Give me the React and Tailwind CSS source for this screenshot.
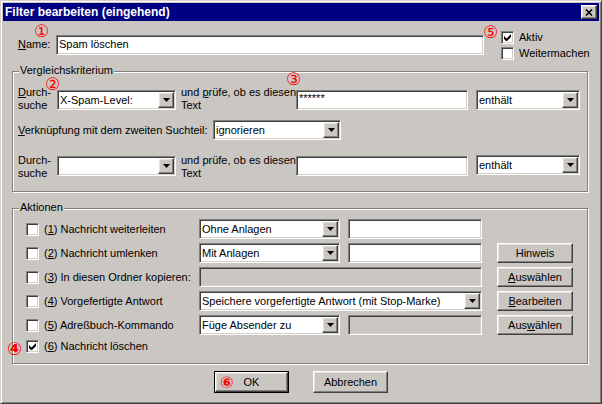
import React from 'react';

const sunken =
  'border border-t-[#808080] border-l-[#808080] border-r-white border-b-white shadow-[inset_1px_1px_0_#404040,inset_-1px_-1px_0_#d4d0c8]';
const raised =
  'border border-t-white border-l-white border-r-[#404040] border-b-[#404040] shadow-[inset_-1px_-1px_0_#808080,inset_1px_1px_0_#e4e1dc] bg-[#cac6c2]';

const U = ({ children }) => <u className="underline underline-offset-[1px] decoration-1">{children}</u>;

function Arrow() {
  return (
    <div className={`${raised} w-[16px] h-[16px] shrink-0 flex items-center justify-center`}>
      <svg width="7" height="4" viewBox="0 0 7 4">
        <path d="M0 0h7L3.5 4z" fill="#000" />
      </svg>
    </div>
  );
}

function Combo({ className = '', value }) {
  return (
    <div className={`${sunken} bg-white h-[20px] flex items-center pl-[2px] pr-[1px] shrink-0 ${className}`}>
      <span className="flex-1 whitespace-nowrap overflow-hidden">{value}</span>
      <Arrow />
    </div>
  );
}

function TextBox({ className = '', disabled, children }) {
  return (
    <div
      className={`${sunken} h-[20px] flex items-center pl-[2px] shrink-0 whitespace-nowrap ${
        disabled ? 'bg-[#cac6c2]' : 'bg-white'
      } ${className}`}
    >
      {children}
    </div>
  );
}

function Check({ checked }) {
  return (
    <div className={`${sunken} bg-white w-[13px] h-[13px] shrink-0 flex items-center justify-center`}>
      {checked && (
        <svg width="7" height="7" viewBox="0 0 7 7">
          <path d="M0 2v3l2 2h1l4-4V0L2.5 4.5z" fill="#000" />
        </svg>
      )}
    </div>
  );
}

function Button({ className = '', children }) {
  return (
    <div className={`${raised} h-[20px] w-[76px] shrink-0 flex items-center justify-center ${className}`}>
      {children}
    </div>
  );
}

function Group({ label, className = '', children }) {
  return (
    <div className={`relative border border-[#808080] shadow-[inset_1px_1px_0_#ffffff,1px_1px_0_#ffffff] ${className}`}>
      <span className="absolute left-[6px] -top-[8px] bg-[#cac6c2] px-[1px]">{label}</span>
      {children}
    </div>
  );
}

// red circled numbers lying over the dialog
function Marker({ className, children }) {
  return (
    <span className={`absolute leading-[11px] text-[#ff0000] font-['DejaVu_Sans',sans-serif] ${className}`}>
      {children}
    </span>
  );
}

function ActionRow({ label, checked, children, button }) {
  return (
    <div className="flex h-[20px] items-center pl-[13px]">
      <div className="flex items-center w-[173px] shrink-0">
        <Check checked={checked} />
        <span className="ml-[5px] whitespace-nowrap">{label}</span>
      </div>
      <div className="flex w-[283px] shrink-0">{children}</div>
      {button && <Button className="ml-[15px]">{button}</Button>}
    </div>
  );
}

export default function App() {
  return (
    <div className="relative w-[602px] h-[404px] overflow-hidden font-['Liberation_Sans',Arial,sans-serif] text-[11px] leading-[13px] text-black select-none">
      <div className="w-full h-full bg-[#cac6c2] border border-t-[#d4d0c8] border-l-[#d4d0c8] border-r-[#404040] border-b-[#404040] shadow-[inset_1px_1px_0_#ffffff,inset_-1px_-1px_0_#808080] p-[2px] flex flex-col">
        {/* title bar */}
        <div className="h-[18px] bg-[#000080] flex items-center pl-[2px] pr-[2px] shrink-0">
          <span className="flex-1 text-white font-bold text-[12px] leading-[14px]">Filter bearbeiten (eingehend)</span>
          <div className={`${raised} w-[16px] h-[14px] flex items-center justify-center`}>
            <svg width="8" height="7" viewBox="0 0 8 7">
              <path d="M1 0.5L7 6.5M7 0.5L1 6.5" stroke="#000" strokeWidth="1.6" />
            </svg>
          </div>
        </div>

        {/* name row */}
        <div className="flex mt-[10px] h-[29px] shrink-0">
          <div className="flex items-center mt-[4px] h-[19px]">
            <span className="w-[53px] pl-[15px]">
              <U>N</U>ame:
            </span>
            <TextBox className="w-[428px] h-[19px]">Spam löschen</TextBox>
          </div>
          <div className="ml-[17px] flex flex-col gap-[3px]">
            <div className="flex items-center h-[13px]">
              <Check checked />
              <span className="ml-[5px]">Aktiv</span>
            </div>
            <div className="flex items-center h-[13px]">
              <Check />
              <span className="ml-[5px]">Weitermachen</span>
            </div>
          </div>
        </div>

        {/* Vergleichskriterium */}
        <Group label="Vergleichskriterium" className="mt-[11px] ml-[9px] w-[576px] h-[121px] shrink-0">
          <div className="flex items-start mt-[14px] pl-[5px]">
            <span className="w-[39px]">
              <U>D</U>urch-
              <br />
              suche
            </span>
            <Combo className="w-[119px] mt-[4px]" value="X-Spam-Level:" />
            <span className="w-[115px] ml-[5px]">
              und <U>p</U>rüfe, ob es diesen
              <br />
              Text
            </span>
            <TextBox className="w-[172px] mt-[4px] items-start pt-[1px]">******</TextBox>
            <Combo className="w-[104px] ml-[8px] mt-[4px]" value="enthält" />
          </div>
          <div className="flex items-center h-[20px] mt-[8px] pl-[5px]">
            <span className="w-[195px]">
              <U>V</U>erknüpfung mit dem zweiten Suchteil:
            </span>
            <Combo className="w-[128px]" value="ignorieren" />
          </div>
          <div className="flex items-start mt-[14px] pl-[5px]">
            <span className="w-[39px]">
              Durch-
              <br />
              suche
            </span>
            <Combo className="w-[119px] mt-[2px]" value="" />
            <span className="w-[115px] ml-[5px]">
              und prüfe, ob es diesen
              <br />
              Text
            </span>
            <TextBox className="w-[172px] mt-[2px]" />
            <Combo className="w-[104px] ml-[8px] mt-[1px]" value="enthält" />
          </div>
        </Group>

        {/* Aktionen */}
        <Group label="Aktionen" className="mt-[16px] ml-[9px] w-[576px] h-[156px] shrink-0">
          <div className="flex flex-col gap-[4px] mt-[10px]">
            <ActionRow label={<><span>(<U>1</U>)</span> Nachricht weiterleiten</>}>
              <Combo className="w-[141px]" value="Ohne Anlagen" />
              <TextBox className="w-[134px] ml-[8px]" />
            </ActionRow>
            <ActionRow label={<><span>(<U>2</U>)</span> Nachricht umlenken</>} button="Hinweis">
              <Combo className="w-[141px]" value="Mit Anlagen" />
              <TextBox className="w-[134px] ml-[8px]" />
            </ActionRow>
            <ActionRow
              label={<><span>(<U>3</U>)</span> In diesen Ordner kopieren:</>}
              button={<><U>A</U>uswählen</>}
            >
              <TextBox className="w-[283px]" disabled />
            </ActionRow>
            <ActionRow
              label={<><span>(<U>4</U>)</span> Vorgefertigte Antwort</>}
              button={<><U>B</U>earbeiten</>}
            >
              <Combo className="w-[283px]" value="Speichere vorgefertigte Antwort (mit Stop-Marke)" />
            </ActionRow>
            <ActionRow
              label={<><span>(<U>5</U>)</span> Adreßbuch-Kommando</>}
              button={<>Aus<U>w</U>ählen</>}
            >
              <Combo className="w-[141px]" value="Füge Absender zu" />
              <TextBox className="w-[134px] ml-[8px]" disabled />
            </ActionRow>
            <div className="flex items-center h-[14px] pl-[13px]">
              <Check checked />
              <span className="ml-[5px]">
                (<U>6</U>) Nachricht löschen
              </span>
            </div>
          </div>
        </Group>

        {/* bottom buttons */}
        <div className="flex justify-center gap-[24px] mt-[7px] shrink-0">
          <div className="border border-black w-[75px] h-[22px] flex">
            <div className={`${raised} flex-1 flex items-center justify-center`}>OK</div>
          </div>
          <div className={`${raised} w-[75px] h-[22px] flex items-center justify-center`}>Abbrechen</div>
        </div>
      </div>

      <Marker className="left-[34px] top-[26px] text-[17px]">①</Marker>
      <Marker className="left-[45px] top-[79px] text-[17px]">②</Marker>
      <Marker className="left-[286px] top-[74px] text-[17px]">③</Marker>
      <Marker className="left-[7px] top-[343px] text-[18px] font-bold">④</Marker>
      <Marker className="left-[483px] top-[27px] text-[17px]">⑤</Marker>
      <Marker className="left-[220px] top-[377px] text-[16px] font-bold">⑥</Marker>
    </div>
  );
}
